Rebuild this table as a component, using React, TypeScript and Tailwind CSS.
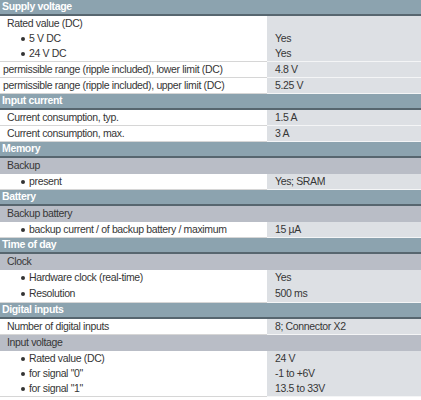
type Line = { label: string; value?: string; bullet?: boolean; tight?: boolean };
type Block = { sub: string } | { lines: Line[]; tall?: boolean };
type Section = { title: string; blocks: Block[] };

const data: Section[] = [
  {
    title: 'Supply voltage',
    blocks: [
      {
        lines: [
          { label: 'Rated value (DC)' },
          { label: '5 V DC', value: 'Yes', bullet: true },
          { label: '24 V DC', value: 'Yes', bullet: true },
        ],
      },
      { lines: [{ label: 'permissible range (ripple included), lower limit (DC)', value: '4.8 V', tight: true }] },
      { lines: [{ label: 'permissible range (ripple included), upper limit (DC)', value: '5.25 V', tight: true }] },
    ],
  },
  {
    title: 'Input current',
    blocks: [
      { lines: [{ label: 'Current consumption, typ.', value: '1.5 A' }] },
      { lines: [{ label: 'Current consumption, max.', value: '3 A' }] },
    ],
  },
  {
    title: 'Memory',
    blocks: [{ sub: 'Backup' }, { lines: [{ label: 'present', value: 'Yes; SRAM', bullet: true }] }],
  },
  {
    title: 'Battery',
    blocks: [
      { sub: 'Backup battery' },
      { lines: [{ label: 'backup current / of backup battery / maximum', value: '15 µA', bullet: true }] },
    ],
  },
  {
    title: 'Time of day',
    blocks: [
      { sub: 'Clock' },
      {
        tall: true,
        lines: [
          { label: 'Hardware clock (real-time)', value: 'Yes', bullet: true },
          { label: 'Resolution', value: '500 ms', bullet: true },
        ],
      },
    ],
  },
  {
    title: 'Digital inputs',
    blocks: [
      { lines: [{ label: 'Number of digital inputs', value: '8; Connector X2' }] },
      { sub: 'Input voltage' },
      {
        lines: [
          { label: 'Rated value (DC)', value: '24 V', bullet: true },
          { label: 'for signal "0"', value: '-1 to +6V', bullet: true },
          { label: 'for signal "1"', value: '13.5 to 33V', bullet: true },
        ],
      },
    ],
  },
];

// label cell line
const Label = ({ line, tall }: { line: Line; tall?: boolean }) => (
  <div
    className={`${tall ? 'h-[16px]' : 'h-[15px]'} flex items-center whitespace-nowrap ${
      line.bullet ? 'pl-[21px]' : line.tight ? 'pl-[3px]' : 'pl-[7px]'
    }`}
  >
    {line.bullet && <span className="w-[4px] h-[4px] rounded-full bg-[#333] mr-[4px]" />}
    {line.label}
  </div>
);

export default function App() {
  return (
    <div className="w-[421px] h-[400px] overflow-hidden bg-white text-[10.5px] tracking-[-0.35px] text-[#363636] font-['Liberation_Sans',Arial,sans-serif]">
      {data.map((s) => (
        <div key={s.title}>
          <div className="h-[16px] bg-[#8ca3af] border-b-2 border-[#57666f] pl-[2px] flex items-center font-bold text-[10.5px] text-white">
            {s.title}
          </div>
          {s.blocks.map((b, i) =>
            'sub' in b ? (
              <div key={i} className="h-[16px] bg-[#b9bdc6] pl-[7px] flex items-center">
                {b.sub}
              </div>
            ) : (
              <div key={i} className="flex">
                <div className="w-[267px] border-b border-[#d6d6d6]">
                  {b.lines.map((l) => (
                    <Label key={l.label} line={l} tall={b.tall} />
                  ))}
                </div>
                <div className="flex-1 bg-[#dde0e4] border-b border-[#f4f5f6] pl-[8px]">
                  {b.lines.map((l) => (
                    <div key={l.label} className={`${b.tall ? 'h-[16px]' : 'h-[15px]'} flex items-center whitespace-nowrap`}>
                      {l.value ?? ''}
                    </div>
                  ))}
                </div>
              </div>
            ),
          )}
        </div>
      ))}
    </div>
  );
}
